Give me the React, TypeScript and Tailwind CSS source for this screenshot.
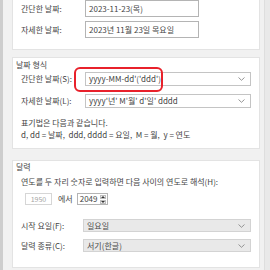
import React from "react";

const Chevron = () => (
  <svg width="7" height="4" viewBox="0 0 7 4" className="shrink-0">
    <polyline points="0.5,0.5 3.5,3.3 6.5,0.5" fill="none" stroke="#8a8a8a" strokeWidth="0.9" />
  </svg>
);

function Combo({ text, gray, className = "" }: { text: string; gray?: boolean; className?: string }) {
  return (
    <div
      className={
        "flex items-center justify-between border px-[3px] pr-[5px] " +
        (gray ? "bg-[#e9e9e9] border-[#d3d3d3] text-[#4a4a4a] " : "bg-white border-[#c4c4c4] ") +
        className
      }
    >
      <span className="whitespace-nowrap">{text}</span>
      <Chevron />
    </div>
  );
}

function Label({ children, w }: { children: React.ReactNode; w: string }) {
  return <div className={"shrink-0 pl-[8px] whitespace-nowrap " + w}>{children}</div>;
}

export default function App() {
  return (
    <div
      className="w-[270px] h-[270px] overflow-hidden bg-[#f1f1f1] flex text-[8px] leading-[12px] text-[#454545]"
      style={{ fontFamily: '"Noto Sans CJK KR", "Noto Sans", sans-serif' }}
    >
      <div className="w-[3px] shrink-0 bg-[#cdcdcd]" />
      <div className="flex-1 flex flex-col pl-[9px]">
        {/* 날짜 미리보기 */}
        <div className="w-[248px] h-[50px] shrink-0 bg-white border-x border-b border-[#e3e3e3] flex flex-col gap-[4px]">
          <div className="flex items-center h-[17px]">
            <Label w="w-[72px]">간단한 날짜:</Label>
            <div className="w-[114px] h-[17px] border border-[#b4b4b4] px-[3px] flex items-center">2023-11-23(목)</div>
          </div>
          <div className="flex items-center h-[17px]">
            <Label w="w-[72px]">자세한 날짜:</Label>
            <div className="w-[114px] h-[17px] border border-[#b4b4b4] px-[3px] flex items-center">2023년 11월 23일 목요일</div>
          </div>
        </div>

        {/* 날짜 형식 */}
        <div className="mt-[7px] w-[248px] h-[92px] shrink-0 bg-white border border-[#e3e3e3] flex flex-col">
          <div className="h-[13px] pl-[3px] leading-[13px]">날짜 형식</div>
          <div className="mt-[1px] flex items-center h-[14px]">
            <Label w="w-[72px]">간단한 날짜(S):</Label>
            <div className="relative">
              <Combo text="yyyy-MM-dd'('ddd')'" className="w-[166px] h-[14px] border-[#7fb6ec]" />
              <div className="absolute left-[-11px] top-[-5px] w-[89px] h-[25px] rounded-[6px] border-2 border-[#e8212b]" />
            </div>
          </div>
          <div className="mt-[8px] flex items-center h-[14px]">
            <Label w="w-[72px]">자세한 날짜(L):</Label>
            <Combo text="yyyy'년' M'월' d'일' dddd" className="w-[166px] h-[14px]" />
          </div>
          <div className="mt-[9px] pl-[8px]">표기법은 다음과 같습니다.</div>
          <div className="pl-[8px] whitespace-nowrap">d, dd = 날짜,&nbsp; ddd, dddd = 요일,&nbsp; M = 월,&nbsp; y = 연도</div>
        </div>

        {/* 달력 */}
        <div className="mt-[11px] w-[248px] h-[108px] shrink-0 bg-white border border-[#e3e3e3] flex flex-col">
          <div className="h-[11px] pl-[3px] leading-[11px]">달력</div>
          <div className="mt-[4px] pl-[8px] whitespace-nowrap">연도를 두 자리 숫자로 입력하면 다음 사이의 연도로 해석(H):</div>
          <div className="mt-[5px] flex items-center h-[12px] pl-[12px]">
            <div className="w-[27px] h-[12px] border border-[#d6d6d6] text-[7px] text-[#a3a3a3] flex items-center justify-center">1950</div>
            <div className="ml-[6px] whitespace-nowrap">에서</div>
            <div className="ml-[4px] w-[31px] h-[12px] border border-[#b4b4b4] flex items-center justify-between pl-[2px] pr-[1px]">
              <span>2049</span>
              <div className="flex flex-col gap-[1px]">
                <div className="w-[6px] h-[4px] border border-[#bdbdbd] bg-[#f4f4f4] flex items-center justify-center">
                  <svg width="4" height="2" viewBox="0 0 4 2"><polygon points="0,2 2,0 4,2" fill="#333" /></svg>
                </div>
                <div className="w-[6px] h-[4px] border border-[#bdbdbd] bg-[#f4f4f4] flex items-center justify-center">
                  <svg width="4" height="2" viewBox="0 0 4 2"><polygon points="0,0 4,0 2,2" fill="#333" /></svg>
                </div>
              </div>
            </div>
          </div>
          <div className="mt-[14px] flex items-center h-[13px]">
            <Label w="w-[70px]">시작 요일(F):</Label>
            <Combo gray text="일요일" className="w-[168px] h-[13px]" />
          </div>
          <div className="mt-[7px] flex items-center h-[13px]">
            <Label w="w-[70px]">달력 종류(C):</Label>
            <Combo gray text="서기(한글)" className="w-[168px] h-[13px]" />
          </div>
        </div>
      </div>
      <div className="w-[6px] shrink-0 bg-[#e9e9e9] border-l border-[#dedede]" />
    </div>
  );
}
